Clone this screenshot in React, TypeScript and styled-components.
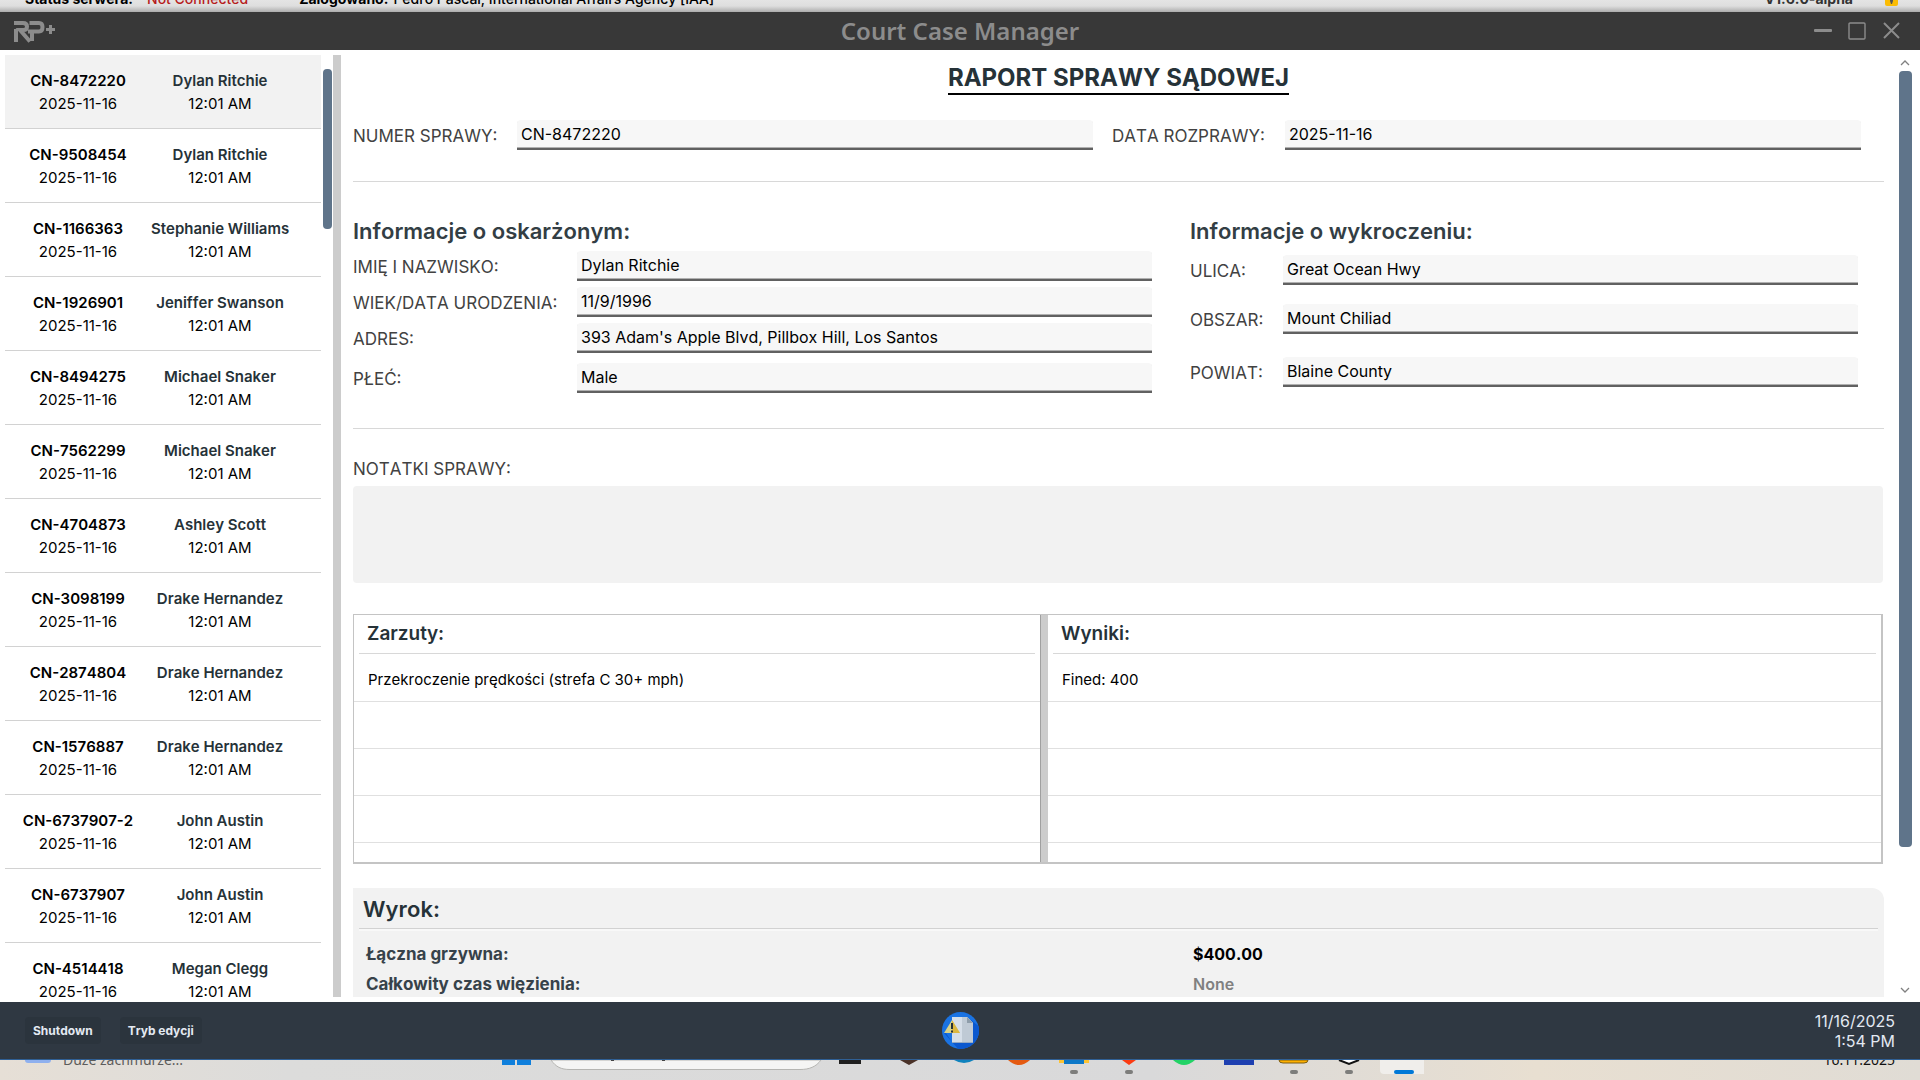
import React from 'react';
import styled, { createGlobalStyle } from 'styled-components';

const sans = '"Inter", "Liberation Sans", sans-serif';
const system = '"Noto Sans", "Open Sans", sans-serif';

const Global = createGlobalStyle`
  *, *::before, *::after { box-sizing: border-box; }
  body { margin: 0; font-family: ${sans}; font-kerning: none; color: #000; background: #fff; }
  button, input, textarea { font: inherit; font-kerning: inherit; color: inherit; }
`;

const Page = styled.div`
  height: 100vh;
  display: flex;
  flex-direction: column;
  overflow: hidden;
`;

const StatusStrip = styled.div`
  flex: none;
  height: 12px;
  display: flex;
  align-items: flex-end;
  padding: 0 22px 0 25px;
  overflow: hidden;
  white-space: nowrap;
  font-size: 14px;
  line-height: 20px;
  background: linear-gradient(#e4e4e4, #dedede 50%, #acacac);
`;

const StatusItem = styled.span<{ $gap: number; $color?: string; $bold?: boolean }>`
  margin-right: ${(p) => p.$gap}px;
  padding-bottom: 3px;
  color: ${(p) => p.$color ?? '#000'};
  font-weight: ${(p) => (p.$bold ? 700 : 500)};
`;

const Version = styled(StatusItem)`
  margin-left: auto;
`;

const Lock = styled.svg`
  flex: none;
  width: 13px;
  height: 20px;
  margin-bottom: 6px;
`;

const TitleBar = styled.header`
  flex: none;
  height: 38px;
  display: grid;
  grid-template-columns: 1fr auto 1fr;
  align-items: center;
  padding: 0 13px;
  background: #383838;
  color: #8c8c8c;
`;

const WindowTitle = styled.h1`
  margin: 0;
  font-family: ${system};
  font-size: 24px;
  line-height: 32px;
  font-weight: 600;
`;

const WindowButtons = styled.div`
  justify-self: end;
  display: flex;
  gap: 16px;
  padding-right: 7px;
`;

const WindowButton = styled.button`
  width: 18px;
  height: 20px;
  padding: 0;
  border: 0;
  background: none;
  svg { display: block; }
`;

const Workspace = styled.div`
  flex: 1;
  min-height: 0;
  display: flex;
  padding: 5px 6px 5px 5px;
`;

const CaseList = styled.nav`
  flex: none;
  width: 316px;
  overflow: hidden;
`;

const CaseItem = styled.button<{ $active?: boolean }>`
  display: grid;
  grid-template-columns: 146px 138px;
  align-content: center;
  width: 100%;
  height: 74px;
  padding: 0;
  border: 0;
  border-bottom: 1px solid #d2d2d2;
  background: ${(p) => (p.$active ? '#f2f2f2' : '#fff')};
  text-align: center;
  font-size: 15px;
  line-height: 23px;
  font-weight: 400;
  white-space: nowrap;
`;

const CaseNumber = styled.span`
  font-weight: 600;
`;

const CaseName = styled.span`
  font-weight: 600;
  color: #263238;
`;

const ListTrack = styled.div`
  flex: none;
  width: 12px;
  padding: 14px 1px 0 2px;
`;

const ListThumb = styled.div`
  height: 160px;
  border-radius: 4px;
  background: #5f748a;
`;

const PaneDivider = styled.div`
  flex: none;
  width: 8px;
  background: #ccc;
`;

const Report = styled.main`
  flex: 1;
  min-width: 0;
  overflow: hidden;
  padding: 7px 12px 0;
`;

const ReportTitle = styled.h2`
  width: fit-content;
  margin: 0 auto 25px;
  border-bottom: 2px solid #000;
  font-size: 24px;
  line-height: 31px;
  font-weight: 700;
  color: #263238;
`;

const TopFields = styled.div`
  display: flex;
  gap: 19px;
  padding: 0 23px 31px 0;
`;

const Field = styled.div<{ $label: number }>`
  flex: 1 1 ${(p) => p.$label}px;
  min-width: 0;
  display: flex;
  align-items: center;
`;

const Label = styled.label<{ $width: number }>`
  display: block;
  flex: none;
  width: ${(p) => p.$width}px;
  padding-top: 2px;
  font-size: 17px;
  line-height: 24px;
  color: #424242;
  white-space: nowrap;
`;

const Input = styled.input`
  flex: 1;
  min-width: 0;
  height: 30px;
  padding: 0 4px 1px;
  border: 0;
  border-bottom: 2px solid #616161;
  border-radius: 4px 4px 0 0;
  box-shadow: inset 0 -1px #b0b0b0;
  background: #f7f7f7;
  font-size: 16px;
  font-weight: 400;
  outline: 0;
`;

const Rule = styled.hr`
  height: 1px;
  margin: 0;
  border: 0;
  background: #d8d8d8;
`;

const InfoColumns = styled.div`
  display: flex;
  gap: 38px;
  padding: 34px 26px 35px 0;
`;

const InfoColumn = styled.section<{ $label: number }>`
  flex: 1 1 ${(p) => p.$label}px;
  min-width: 0;
`;

const InfoHeading = styled.h3`
  margin: 0;
  font-size: 22px;
  line-height: 31px;
  font-weight: 600;
  color: #333e44;
`;

const InfoRow = styled.div<{ $top: number }>`
  display: flex;
  align-items: center;
  margin-top: ${(p) => p.$top}px;
`;

const NotesBlock = styled.div`
  padding: 26px 1px 31px 0;
`;

const Notes = styled.textarea`
  display: block;
  width: 100%;
  height: 97px;
  margin-top: 5px;
  padding: 8px;
  border: 0;
  border-radius: 4px;
  background: #f2f2f2;
  resize: none;
  outline: 0;
`;

const ListsFrame = styled.div`
  display: grid;
  grid-template-columns: 14fr 8px 17fr;
  height: 250px;
  margin: 0 1px 24px 0;
  border: 1px solid #c4c4c4;
  border-width: 1px 2px 2px 1px;
  overflow: hidden;
`;

const Splitter = styled.div`
  background: #ccc;
  border-left: 1px solid #a0a0a0;
`;

const DataTable = styled.table`
  width: 100%;
  border-collapse: collapse;
`;

const HeadCell = styled.th`
  height: 39px;
  padding: 0 5px;
  text-align: left;
  font-size: 19px;
  line-height: 38px;
  font-weight: 600;
  color: #263238;
`;

const HeadText = styled.div`
  padding-left: 8px;
  border-bottom: 1px solid #d8d8d8;
`;

const Cell = styled.td`
  height: 47px;
  padding: 5px 14px 0;
  border-bottom: 1px solid #e0e0e0;
  font-size: 15px;
  line-height: 20px;
  font-weight: 400;
`;

const Verdict = styled.section`
  min-height: 160px;
  padding: 5px 6px;
  border-radius: 0 12px 0 0;
  background: #f2f2f2;
`;

const VerdictTitle = styled.h3`
  margin: 0;
  padding: 0 4px 3px;
  border-bottom: 1px solid #d2d2d2;
  box-shadow: 0 2px #f8f8f8;
  font-size: 22px;
  line-height: 32px;
  font-weight: 600;
  color: #263238;
`;

const VerdictList = styled.dl`
  display: grid;
  grid-template-columns: 827fr 685fr;
  margin: 0;
  padding: 10px 0 0 7px;
  font-size: 17px;
  line-height: 30px;
`;

const Term = styled.dt`
  font-weight: 700;
  color: #37424a;
`;

const Value = styled.dd<{ $muted?: boolean }>`
  margin: 0;
  font-size: 16px;
  font-weight: ${(p) => (p.$muted ? 600 : 700)};
  color: ${(p) => (p.$muted ? '#808080' : '#000')};
`;

const ReportTrack = styled.div`
  flex: none;
  width: 18px;
  display: flex;
  flex-direction: column;
  align-items: center;
  padding: 3px 0 2px;
`;

const TrackRoom = styled.div`
  flex: 1;
  width: 13px;
  margin: 4px 0;
`;

const ReportThumb = styled.div`
  height: calc(85% + 2px);
  border-radius: 4px;
  background: #5f748a;
`;

const AppBar = styled.footer`
  flex: none;
  height: 58px;
  display: grid;
  grid-template-columns: 1fr auto 1fr;
  align-items: center;
  padding: 0 25px;
  border-bottom: 1px solid #2f5f94;
  background: #2f3842;
  color: #e3e9f2;
`;

const BarButtons = styled.div`
  display: flex;
  gap: 19px;
`;

const BarButton = styled.button`
  height: 27px;
  padding: 0 8px;
  border: 0;
  border-radius: 4px;
  background: #2b343d;
  font-size: 12px;
  font-weight: 700;
`;

const AppButton = styled.button`
  width: 37px;
  height: 37px;
  padding: 0;
  border: 0;
  background: none;
  svg { display: block; }
`;

const Clock = styled.div`
  justify-self: end;
  text-align: right;
  font-size: 16px;
  line-height: 20px;
`;

const Desktop = styled.div`
  flex: none;
  height: 20px;
  display: grid;
  grid-template-columns: 1fr auto 1fr;
  overflow: hidden;
  padding: 0 25px;
  background: linear-gradient(90deg, #e6dfd6, #dcdcdb 15%, #d9d9da 60%, #e8dfd1 80%, #e0dcd5 100%);
  font-family: ${system};
  font-size: 14px;
  line-height: 20px;
`;

const Weather = styled.div`
  display: flex;
  gap: 12px;
  color: #5c5c5c;
`;

const WeatherIcon = styled.div`
  width: 26px;
  height: 3px;
  border-radius: 0 0 8px 8px;
  background: #8fb0ee;
`;

const ClippedText = styled.span`
  margin-top: -10px;
`;

const DesktopDate = styled(ClippedText)`
  justify-self: end;
  color: #111;
`;

const Pinned = styled.svg`
  display: block;
  width: 928px;
  height: 20px;
`;

const cases: [string, string][] = [
  ['CN-8472220', 'Dylan Ritchie'],
  ['CN-9508454', 'Dylan Ritchie'],
  ['CN-1166363', 'Stephanie Williams'],
  ['CN-1926901', 'Jeniffer Swanson'],
  ['CN-8494275', 'Michael Snaker'],
  ['CN-7562299', 'Michael Snaker'],
  ['CN-4704873', 'Ashley Scott'],
  ['CN-3098199', 'Drake Hernandez'],
  ['CN-2874804', 'Drake Hernandez'],
  ['CN-1576887', 'Drake Hernandez'],
  ['CN-6737907-2', 'John Austin'],
  ['CN-6737907', 'John Austin'],
  ['CN-4514418', 'Megan Clegg'],
];

const accused = [
  { id: 'name', label: 'IMIĘ I NAZWISKO:', value: 'Dylan Ritchie', top: 4 },
  { id: 'birth', label: 'WIEK/DATA URODZENIA:', value: '11/9/1996', top: 6 },
  { id: 'address', label: 'ADRES:', value: "393 Adam's Apple Blvd, Pillbox Hill, Los Santos", top: 6 },
  { id: 'sex', label: 'PŁEĆ:', value: 'Male', top: 10 },
];

const offence = [
  { id: 'street', label: 'ULICA:', value: 'Great Ocean Hwy', top: 8 },
  { id: 'area', label: 'OBSZAR:', value: 'Mount Chiliad', top: 19 },
  { id: 'county', label: 'POWIAT:', value: 'Blaine County', top: 23 },
];

function Logo() {
  return (
    <svg width="43" height="23" viewBox="0 0 43 23" fill="none" stroke="#8c8c8c" aria-label="RP+">
      <path d="M1 3H10Q14 3 14 6.500Q14 10 10.500 10H7L17 21.500" strokeWidth="4" />
      <path d="M3 9V22" strokeWidth="4" />
      <path d="M16.500 3H26Q29.500 3 29.500 7Q29.500 11.500 26 11.500H15" strokeWidth="4" />
      <path d="M19 11V21" strokeWidth="4" />
      <path d="M33 9.500H42M37.500 5V14" strokeWidth="3" />
    </svg>
  );
}

function Chevron({ up }: { up?: boolean }) {
  return (
    <svg width="10" height="9" viewBox="0 0 10 9" fill="none" stroke="#808080" strokeWidth="1.300">
      <path d={up ? 'M1 7L5 3L9 7' : 'M1 2L5 6L9 2'} />
    </svg>
  );
}

function CaseIcon() {
  return (
    <svg width="37" height="37" viewBox="0 0 37 37">
      <circle cx="18.500" cy="18.500" r="18.500" fill="#1a73e3" />
      <path d="M2 21L16 36.800A18.500 18.500 0 0 0 36.500 14L29 8L10 30L4 21Z" fill="#0b58cf" />
      <path d="M10 5H25L31 11V31H10Z" fill="#d6dfe9" />
      <path d="M20 5H25L31 11V31H20Z" fill="#bfcad5" />
      <path d="M25 5L31 11H25Z" fill="#8e9daa" />
      <path d="M10 30H31V31H10Z" fill="#93a9c4" />
      <path d="M10 8L18 21H2Z" fill="#d8d28a" />
      <path d="M10 8L18 21H10Z" fill="#dcb840" />
      <path d="M9 11H11V17H9ZM9 18.500H11V20.500H9Z" fill="#263238" />
    </svg>
  );
}

function Rows({ title, first }: { title: string; first: string }) {
  return (
    <DataTable>
      <thead>
        <tr><HeadCell scope="col"><HeadText>{title}</HeadText></HeadCell></tr>
      </thead>
      <tbody>
        {[first, '', '', '', ''].map((text, i) => (
          <tr key={i}><Cell>{text}</Cell></tr>
        ))}
      </tbody>
    </DataTable>
  );
}

export default function App() {
  return (
    <Page>
      <Global />
      <StatusStrip>
        <StatusItem $gap={14} $bold>Status serwera:</StatusItem>
        <StatusItem $gap={51} $color="#b71c1c">Not Connected</StatusItem>
        <StatusItem $gap={5} $bold>Zalogowano:</StatusItem>
        <StatusItem $gap={0}>Pedro Pascal, International Affairs Agency [IAA]</StatusItem>
        <Version $gap={32} $color="#333" $bold>V1.6.0-alpha</Version>
        <Lock viewBox="0 0 13 20">
          <rect width="13" height="20" rx="2" fill="#fbbc04" />
          <path d="M5 13H8V15L7 18H6L5 15Z" fill="#555" />
        </Lock>
      </StatusStrip>

      <TitleBar>
        <Logo />
        <WindowTitle>Court Case Manager</WindowTitle>
        <WindowButtons>
          <WindowButton aria-label="Minimize">
            <svg width="18" height="20" viewBox="0 0 18 20"><rect y="8" width="18" height="3" rx="1" fill="#8c8c8c" /></svg>
          </WindowButton>
          <WindowButton aria-label="Maximize">
            <svg width="18" height="20" viewBox="0 0 18 20"><rect x="1" y="2" width="16" height="16" rx="1" fill="none" stroke="#8c8c8c" strokeWidth="1.400" /></svg>
          </WindowButton>
          <WindowButton aria-label="Close">
            <svg width="18" height="20" viewBox="0 0 18 20"><path d="M2 2L17 17M17 2L2 17" stroke="#8c8c8c" strokeWidth="2" /></svg>
          </WindowButton>
        </WindowButtons>
      </TitleBar>

      <Workspace>
        <CaseList aria-label="Cases">
          {cases.map(([number, name], i) => (
            <CaseItem key={number} $active={i === 0}>
              <CaseNumber>{number}</CaseNumber>
              <CaseName>{name}</CaseName>
              <span>2025-11-16</span>
              <span>12:01 AM</span>
            </CaseItem>
          ))}
        </CaseList>
        <ListTrack><ListThumb /></ListTrack>
        <PaneDivider />

        <Report>
          <ReportTitle>RAPORT SPRAWY SĄDOWEJ</ReportTitle>
          <TopFields>
            <Field $label={164}>
              <Label $width={164} htmlFor="number">NUMER SPRAWY:</Label>
              <Input id="number" defaultValue="CN-8472220" />
            </Field>
            <Field $label={173}>
              <Label $width={173} htmlFor="date">DATA ROZPRAWY:</Label>
              <Input id="date" defaultValue="2025-11-16" />
            </Field>
          </TopFields>
          <Rule />
          <InfoColumns>
            <InfoColumn $label={224}>
              <InfoHeading>Informacje o oskarżonym:</InfoHeading>
              {accused.map((f) => (
                <InfoRow key={f.id} $top={f.top}>
                  <Label $width={224} htmlFor={f.id}>{f.label}</Label>
                  <Input id={f.id} defaultValue={f.value} />
                </InfoRow>
              ))}
            </InfoColumn>
            <InfoColumn $label={93}>
              <InfoHeading>Informacje o wykroczeniu:</InfoHeading>
              {offence.map((f) => (
                <InfoRow key={f.id} $top={f.top}>
                  <Label $width={93} htmlFor={f.id}>{f.label}</Label>
                  <Input id={f.id} defaultValue={f.value} />
                </InfoRow>
              ))}
            </InfoColumn>
          </InfoColumns>
          <Rule />
          <NotesBlock>
            <Label $width={200} htmlFor="notes">NOTATKI SPRAWY:</Label>
            <Notes id="notes" />
          </NotesBlock>
          <ListsFrame>
            <Rows title="Zarzuty:" first="Przekroczenie prędkości (strefa C 30+ mph)" />
            <Splitter />
            <Rows title="Wyniki:" first="Fined: 400" />
          </ListsFrame>
          <Verdict>
            <VerdictTitle>Wyrok:</VerdictTitle>
            <VerdictList>
              <Term>Łączna grzywna:</Term>
              <Value>$400.00</Value>
              <Term>Całkowity czas więzienia:</Term>
              <Value $muted>None</Value>
            </VerdictList>
          </Verdict>
        </Report>
        <ReportTrack>
          <Chevron up />
          <TrackRoom><ReportThumb /></TrackRoom>
          <Chevron />
        </ReportTrack>
      </Workspace>

      <AppBar>
        <BarButtons>
          <BarButton>Shutdown</BarButton>
          <BarButton>Tryb edycji</BarButton>
        </BarButtons>
        <AppButton aria-label="Court Case Manager"><CaseIcon /></AppButton>
        <Clock>11/16/2025<br />1:54 PM</Clock>
      </AppBar>

      <Desktop>
        <Weather>
          <WeatherIcon />
          <ClippedText>Duże zachmurze...</ClippedText>
        </Weather>
        <Pinned viewBox="0 0 928 20" aria-hidden="true">
          <path d="M6 0H19V5H6ZM21 0H35V5H21Z" fill="#0f7fdc" />
          <path d="M55 0C60 7 65 9.500 74 9.500H304C313 9.500 320 7 325 0Z" fill="#f5f5f4" stroke="#b5b5b2" />
          <path d="M115 0h3v1h-3zM166 0h3v1h-3z" fill="#444" />
          <path d="M343 0H365V4H343Z" fill="#1f1f1f" />
          <path d="M404 0H422L413 5Z" fill="#4a3228" />
          <path d="M458 0H478Q468 6 458 0Z" fill="#0f82bd" />
          <path d="M512 0H534Q523 10 512 0Z" fill="#e45a11" />
          <path d="M563 0H593V3H563Z" fill="#fdc331" />
          <path d="M568 0H588V4H568Z" fill="#0d78c8" />
          <path d="M626 0H640L633 5Z" fill="#fb3b12" />
          <path d="M677 0H699Q688 10 677 0Z" fill="#23d366" />
          <path d="M728 0H758V5H728Z" fill="#1e3fb0" />
          <path d="M783 0H812Q812 3 808 3H787Q783 3 783 0Z" fill="#ffb000" stroke="#7a5c12" />
          <path d="M843 0L853 4L863 0" fill="#fff" stroke="#111" strokeWidth="2" />
          <path d="M884 0H932V10Q932 14 928 14H888Q884 14 884 10Z" fill="#f0eeeb" />
          <g fill="#7d7d7b">
            <rect x="574" y="10" width="8" height="4" rx="2" />
            <rect x="629" y="10" width="8" height="4" rx="2" />
            <rect x="794" y="10" width="8" height="4" rx="2" />
            <rect x="849" y="10" width="8" height="4" rx="2" />
          </g>
          <rect x="898" y="10" width="20" height="4" rx="2" fill="#0078d7" />
        </Pinned>
        <DesktopDate>16.11.2025</DesktopDate>
      </Desktop>
    </Page>
  );
}
